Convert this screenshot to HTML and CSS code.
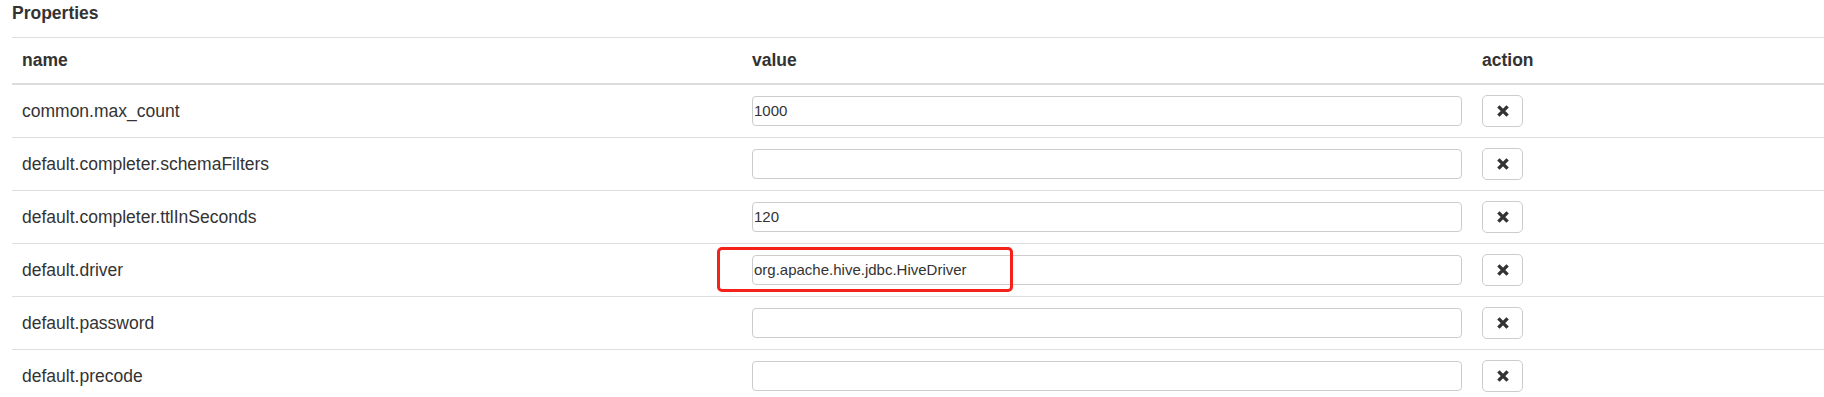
FILE: index.html
```html
<!DOCTYPE html>
<html lang="en">
<head>
    <meta charset="UTF-8">
    <meta name="viewport" content="width=device-width, initial-scale=1.0">
    <title>Interpreter Properties</title>
    <link rel="stylesheet" href="styles.css">
</head>
<body>
    <div class="panel">
        <h4 class="title">Properties</h4>

        <table class="props">
            <colgroup>
                <col class="col-name">
                <col class="col-value">
                <col>
            </colgroup>
            <thead>
                <tr>
                    <th>name</th>
                    <th>value</th>
                    <th>action</th>
                </tr>
            </thead>
            <tbody>
                <tr>
                    <td>common.max_count</td>
                    <td><input type="text" class="prop-input" value="1000"></td>
                    <td><button class="btn-remove" type="button"><svg viewBox="0 0 12 12" width="12" height="12"><path d="M1.4 1.4 L10.6 10.6 M10.6 1.4 L1.4 10.6" /></svg></button></td>
                </tr>
                <tr>
                    <td>default.completer.schemaFilters</td>
                    <td><input type="text" class="prop-input" value=""></td>
                    <td><button class="btn-remove" type="button"><svg viewBox="0 0 12 12" width="12" height="12"><path d="M1.4 1.4 L10.6 10.6 M10.6 1.4 L1.4 10.6" /></svg></button></td>
                </tr>
                <tr>
                    <td>default.completer.ttlInSeconds</td>
                    <td><input type="text" class="prop-input" value="120"></td>
                    <td><button class="btn-remove" type="button"><svg viewBox="0 0 12 12" width="12" height="12"><path d="M1.4 1.4 L10.6 10.6 M10.6 1.4 L1.4 10.6" /></svg></button></td>
                </tr>
                <tr>
                    <td>default.driver</td>
                    <td class="marked">
                        <input type="text" class="prop-input" value="org.apache.hive.jdbc.HiveDriver">
                        <!-- red highlight drawn over the field -->
                        <span class="highlight"></span>
                    </td>
                    <td><button class="btn-remove" type="button"><svg viewBox="0 0 12 12" width="12" height="12"><path d="M1.4 1.4 L10.6 10.6 M10.6 1.4 L1.4 10.6" /></svg></button></td>
                </tr>
                <tr>
                    <td>default.password</td>
                    <td><input type="text" class="prop-input" value=""></td>
                    <td><button class="btn-remove" type="button"><svg viewBox="0 0 12 12" width="12" height="12"><path d="M1.4 1.4 L10.6 10.6 M10.6 1.4 L1.4 10.6" /></svg></button></td>
                </tr>
                <tr>
                    <td>default.precode</td>
                    <td><input type="text" class="prop-input" value=""></td>
                    <td><button class="btn-remove" type="button"><svg viewBox="0 0 12 12" width="12" height="12"><path d="M1.4 1.4 L10.6 10.6 M10.6 1.4 L1.4 10.6" /></svg></button></td>
                </tr>
            </tbody>
        </table>
    </div>
</body>
</html>
```

FILE: styles.css
```css
/* Base page */
body {
    font-family: 'Liberation Sans', Arial, sans-serif;
    font-size: 17.5px;
    line-height: 25px;
    color: #333;
    background-color: #fff;
    margin: 0;
    padding: 0;
}

.panel {
    padding-left: 12px;
}

.title {
    font-size: 17.5px;
    font-weight: bold;
    line-height: 25px;
    margin: 0;
    padding-top: 1px;
    margin-bottom: 11px;
}

/* Properties table */
.props {
    width: calc(100% - 0px);
    table-layout: fixed;
    border-collapse: separate;
    border-spacing: 0;
}

.col-name,
.col-value {
    width: 730px;
}

.props th {
    text-align: left;
    font-weight: bold;
    padding: 10px;
    vertical-align: bottom;
    border-top: 1px solid #ddd;
    border-bottom: 2px solid #ddd;
}

.props td {
    padding: 10px;
    height: 32px;
    vertical-align: middle;
    border-top: 1px solid #ddd;
}

.props tbody tr:first-child td {
    border-top: none;
}

.prop-input {
    display: block;
    width: 100%;
    height: 30px;
    box-sizing: border-box;
    margin: 0;
    padding: 0 1px 2px 1px;
    border: 1px solid #ccc;
    border-radius: 4px;
    font-family: 'Liberation Sans', Arial, sans-serif;
    font-size: 15px;
    color: #333;
    background-color: #fff;
}

.btn-remove {
    display: block;
    width: 41px;
    height: 32px;
    padding: 0;
    border: 1px solid #ccc;
    border-radius: 5px;
    background-color: #fff;
    cursor: pointer;
}

.btn-remove svg {
    display: block;
    margin: 0 auto;
}

.btn-remove path {
    stroke: #333;
    stroke-width: 3.4;
    fill: none;
}

/* Screenshot annotation */
.marked {
    position: relative;
}

.highlight {
    position: absolute;
    left: -25px;
    top: 3px;
    width: 290px;
    height: 39px;
    border: 3px solid #f5221b;
    border-radius: 5px;
    pointer-events: none;
}
```
